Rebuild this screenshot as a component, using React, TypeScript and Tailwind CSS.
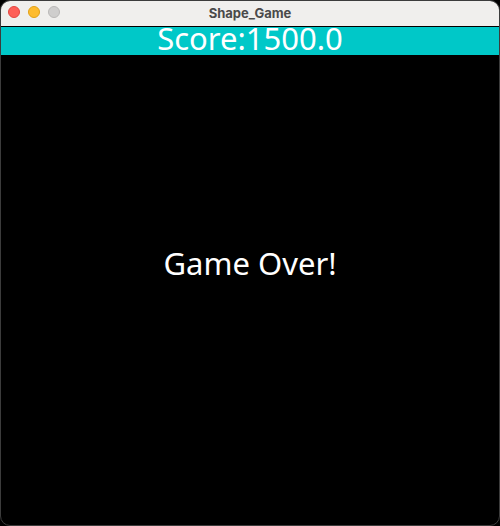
export default function App() {
  const font = { fontFamily: '"Noto Sans", "Open Sans", sans-serif' };
  return (
    <div className="w-[500px] h-[526px] bg-black">
      <div className="w-full h-full rounded-[10px] overflow-hidden border border-[#3c3c3c] flex flex-col bg-black">
        <div className="h-[25px] bg-[#f0efed] relative flex items-center justify-center shrink-0">
          <div className="absolute left-[7px] top-[5px] flex gap-[8px]">
            <div className="w-[12px] h-[12px] rounded-full bg-[#fe5f57] border border-[#e2463f]" />
            <div className="w-[12px] h-[12px] rounded-full bg-[#febc2e] border border-[#e1a116]" />
            <div className="w-[12px] h-[12px] rounded-full bg-[#cfcecd] border border-[#b9b8b7]" />
          </div>
          <span className="text-[13px] font-bold text-[#4a4a4a]" style={{ fontFamily: 'Inter, "Liberation Sans", sans-serif' }}>
            Shape_Game
          </span>
        </div>
        <div className="h-[1px] bg-black shrink-0" />
        <div className="h-[28px] bg-[#00c8c8] flex items-center justify-center shrink-0">
          <span className="text-white text-[31px] leading-[22px] relative -top-[3px]" style={font}>Score:1500.0</span>
        </div>
        <div className="flex-1 flex justify-center pt-[193px]">
          <span className="text-white text-[31px] leading-none h-fit" style={font}>Game Over!</span>
        </div>
      </div>
    </div>
  );
}
